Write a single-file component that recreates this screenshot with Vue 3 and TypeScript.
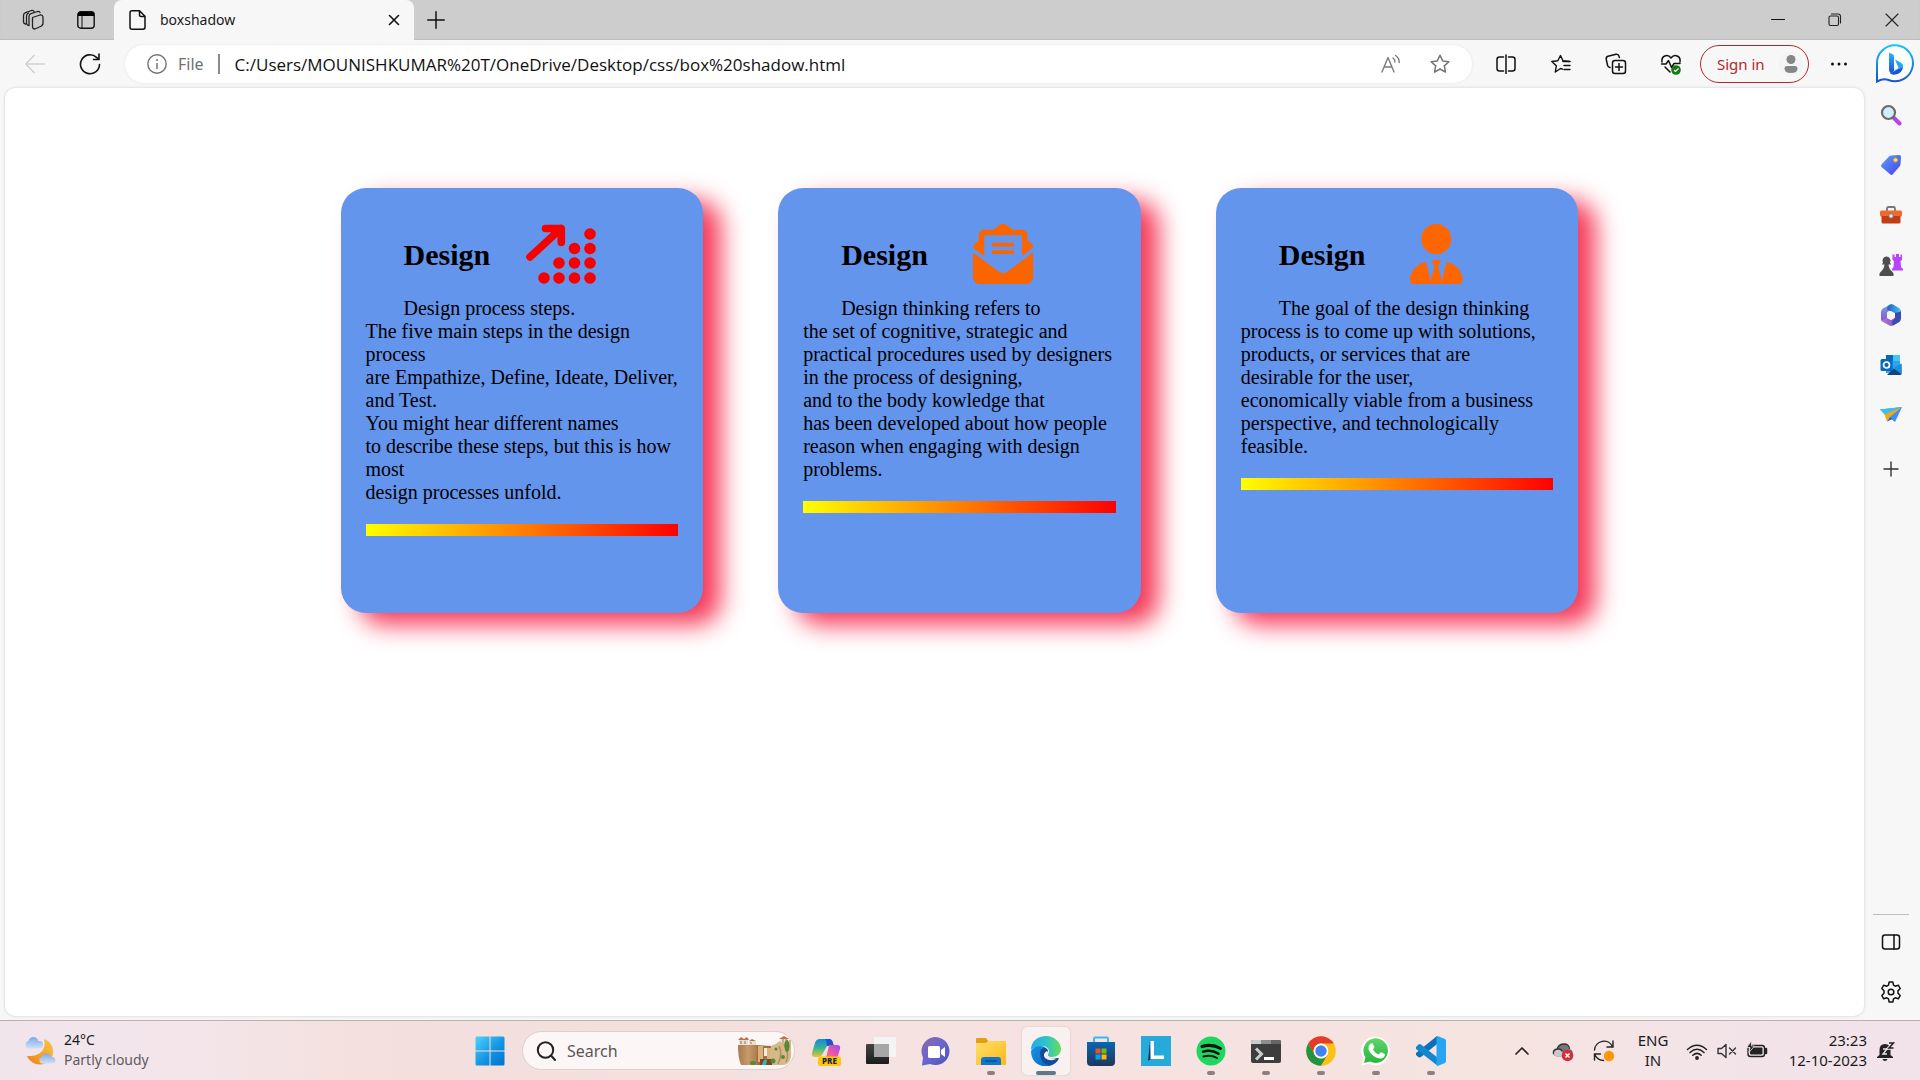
<script setup lang="ts">
import { ref } from 'vue'

interface Glyph { name: string; svg: string }
interface TaskApp extends Glyph { state: '' | 'open' | 'active' }
interface Card { title: string; lines: string[]; svg: string }

const address = ref('C:/Users/MOUNISHKUMAR%20T/OneDrive/Desktop/css/box%20shadow.html')
const query = ref('')

const svg = (size: number, body: string, attrs = ''): string =>
  `<svg width="${size}" height="${size}" viewBox="0 0 ${size} ${size}" fill="none" ${attrs}>${body}</svg>`
const line = (size: number, body: string, color = '#111', w = 1.4): string =>
  svg(size, body, `stroke="${color}" stroke-width="${w}" stroke-linecap="round" stroke-linejoin="round"`)

const icons = {
  workspaces: line(22, '<path d="M10.500 8.500l7.500-2.500q2.500-.5 3 2v7l-1.500 2-6.500 3q-2.500 0-2.500-2.500zM7 16.500V7.500q0-2 2-2.800l6.500-2.200q2-.5 2.500 1M3.500 15q-2-.5-2-2V6.500q0-2 2-2.800L9.500 1.500q2-.5 2.500 1M7 16.500q-2 0-2.500-2V7q0-2 2-2.800"/>', '#222', 1.3),
  tabActions: svg(18, '<rect x=".8" y=".8" width="16.400" height="16.400" rx="3" stroke="#111" stroke-width="1.400"/><path d="M1 5V3.500Q1 1 3.500 1h11Q17 1 17 3.500V5z" fill="#000"/><path d="M5 5v12" stroke="#111"/>'),
  doc: line(20, '<path d="M4 .8h7.500l5.500 5.500v11q0 1.900-2 1.900H4q-2 0-2-2V2.800q0-2 2-2zM11.500 1v4q0 1.500 1.500 1.500h4"/>', '#111', 1.5),
  tabClose: line(12, '<path d="M1.500 1.500l9 9m0-9l-9 9"/>', '#111', 1.6),
  plus: line(18, '<path d="M9 .8v16.400M.8 9h16.400"/>', '#111', 1.5),
  addThin: line(16, '<path d="M8 1v14M1 8h14"/>', '#333', 1.4),
  back: line(20, '<path d="M19.500 10H1M9 1.500L.8 10 9 18.500"/>', '#cfcfcf', 1.4),
  reload: line(22, '<path d="M20.500 11.500A9.500 9.500 0 1 1 17.500 4.300l2 2M20 1v5.500h-5.500"/>', '#111', 1.6),
  info: svg(20, '<circle cx="10" cy="10" r="9.200" stroke="#747474" stroke-width="1.400"/><path d="M10 9v6" stroke="#747474" stroke-width="1.500"/><circle cx="10" cy="6" r="1" fill="#747474"/>'),
  readAloud: line(20, '<path d="M1 18L7 3.500 13 18M3 13h8M12 4q2 1.500 2 4M14.500 1.500q4 2.500 3.700 7"/>', '#7b7b7b', 1.4),
  star: line(20, '<path d="M10 1.200l2.700 5.700 6.200.8-4.600 4.200 1.200 6.200L10 15l-5.500 3.100 1.200-6.200L1.100 7.700l6.200-.8z"/>', '#747474', 1.5),
  split: line(20, '<path d="M7.500 3H3.500Q1 3 1 5.500v9Q1 17 3.500 17h4M12.500 3h4Q19 3 19 5.500v9q0 2.500-2.500 2.500h-4M10 1v18.500"/>', '#111', 1.5),
  favorites: line(20, '<path d="M11.500 15.200L9.500 14.500 4.300 18l1-6.200L.8 7.500l6-.8L9.500 1.500 12 6.700l6.500.8M13 11.500h6M13 15.500h6" /><path d="M12 7.500h7" stroke-width="1.600"/>', '#111', 1.4),
  collections: line(22, '<rect x="7.500" y="7.500" width="13" height="13" rx="2.500"/><path d="M14 10.500v7M10.500 14h7M5 14.500q-2-.5-2.400-2L1.200 6.200Q1 4 3 3.300l8-2Q13.500 1 14 3.200l.4 1.300"/>', '#111', 1.5),
  health: svg(22, '<g stroke="#111" stroke-width="1.500" stroke-linecap="round" stroke-linejoin="round"><path d="M2 9C1 3 7.500.3 11 5c3.500-4.700 10-2 9 4M1.500 11H6l2.500-3.500 3 7 2.500-4h6M5 14l5 5"/></g><circle cx="16" cy="17" r="4.800" fill="#107c10"/><path d="M14 17l1.500 1.500 3-3" stroke="#fff" stroke-width="1.200"/>'),
  person: svg(30, '<circle cx="15" cy="15" r="14" fill="#f5f5f5" stroke="#fcfcfc"/><circle cx="15" cy="10.500" r="4.500" fill="#868686"/><path d="M8.500 19.500q0-2.500 2.500-2.500h8q2.500 0 2.500 2.500 0 4.500-6.500 4.500t-6.500-4.500z" fill="#868686"/>'),
  dots: svg(18, '<g fill="#111"><circle cx="2.500" cy="9" r="1.500"/><circle cx="9" cy="9" r="1.500"/><circle cx="15.500" cy="9" r="1.500"/></g>'),
  minimize: line(14, '<path d="M.5 6.500h13"/>', '#111', 1),
  restore: line(14, '<rect x="1" y="3" width="9.500" height="9.500" rx="1.500"/><path d="M3.500 1H10q2.500 0 2.500 2.500V10"/>', '#222', 1.1),
  close: line(14, '<path d="M1 1l12 12M13 1L1 13"/>', '#222', 1.1),
  bing: svg(40, '<defs><linearGradient id="bo" x1="0" y1="0" x2="0" y2="1"><stop stop-color="#18c5f2"/><stop offset="1" stop-color="#1a54d2"/></linearGradient><linearGradient id="bb" x1="0" y1="0" x2="0" y2="1"><stop stop-color="#2fb4ff"/><stop offset="1" stop-color="#1b4bd8"/></linearGradient></defs><path d="M2 37.500V20.500A18 18 0 1 1 13.500 36q-5-2-11.500 1.500z" fill="#fff" stroke="url(#bo)" stroke-width="2"/><path d="M14 8.500l4 2q1 .5 1 2V27l-2.500 2.500Q14 28.500 14 25z" fill="url(#bb)"/><path d="M20 15.500l5.500 3q4 2.500 2 6.500-1.500 3.500-6 4.500-4 1.500-6 0l8-5.500z" fill="#25a9ee"/><path d="M15 29.500q6-3.500 12.800-6-1 6-7.300 7-3.500.5-5.500-1z" fill="#1c51df"/>'),
  sidebarPanel: line(20, '<rect x="1.500" y="3" width="17" height="14" rx="2.500"/><path d="M13 3v14"/>', '#111', 1.5),
  gear: line(22, '<path d="M9.200 1h3.600l.7 3.200 1.700 1 3.100-1L20.200 7.500 18 9.800v2.400l2.200 2.300-1.900 3.300-3.100-1-1.700 1-.7 3.200H9.200l-.7-3.200-1.700-1-3.100 1-1.900-3.300L4 12.200V9.800L1.800 7.500l1.900-3.300 3.100 1 1.700-1z"/><circle cx="11" cy="11" r="2.800"/>', '#111', 1.5),
  weather: svg(32, '<defs><linearGradient id="mo" x1="1" y1="0" x2="0" y2="1"><stop stop-color="#f9c846"/><stop offset="1" stop-color="#f08214"/></linearGradient><linearGradient id="cl" x1="0" y1="0" x2="0" y2="1"><stop stop-color="#7fa8e8"/><stop offset="1" stop-color="#cfe0fa"/></linearGradient></defs><path d="M20 4c10 3 12 16 5 22-7 6-18 4-22-5 12 1 20-6 17-17z" fill="url(#mo)"/><path d="M4.500 13.500a3.800 3.800 0 0 1-.5-7.300Q6 2 9.500 2t5 4q5-.5 4.500 4 0 3.500-4 3.500z" fill="url(#cl)"/><path d="M17.500 28.500a3.500 3.500 0 0 1 0-6.500Q19 18.500 22.500 18.500t4.500 3.500q4.500-.5 4.500 3.500 0 3-3.500 3z" fill="url(#cl)"/>'),
  windows: svg(30, '<defs><linearGradient id="wi" x1="0" y1="0" x2="30" y2="30" gradientUnits="userSpaceOnUse"><stop stop-color="#50d4ff"/><stop offset=".55" stop-color="#1494e2"/><stop offset="1" stop-color="#006fd0"/></linearGradient></defs><path d="M2 .5h12.500v14H.5V2Q.5.500 2 .5zM15.500.5H28q1.500 0 1.500 1.500v12.500h-14zM.5 15.500h14v14H2q-1.500 0-1.500-1.500zM15.500 15.500h14V28q0 1.500-1.500 1.500H15.500z" fill="url(#wi)"/>'),
  search: line(20, '<circle cx="9.500" cy="9" r="7.700"/><path d="M15 14.500l4 4.500"/>', '#222', 2),
  chevron: line(16, '<path d="M2 11l6-6 6 6"/>', '#222', 1.7),
  cloud: svg(22, '<path d="M5 16.500Q1 16 1 12.500 1.500 9 5 9 7 3.500 12 4q4 .5 5 5 4 .5 3.500 4-.5 3.500-4 3.500z" fill="#777"/><path d="M2.500 15.500Q1 13 3 10.500q3-2 5.500 0l7 6H5z" fill="#c9c9c9"/><path d="M5 9q2-5 7-5t5.500 5M1.500 14q-1-4.500 4-5 3-.5 5 2" stroke="#333" stroke-width="1.300"/><circle cx="15.500" cy="15.500" r="5.800" fill="#d92b3a"/><path d="M13.500 13.500l4 4m0-4l-4 4" stroke="#fff" stroke-width="1.500"/>'),
  sync: svg(22, '<g stroke="#222" stroke-width="1.400" stroke-linecap="round"><path d="M1.500 10A9.500 9.500 0 0 1 19.500 6.500M20 1v6h-6M7.500 14H1.500v6M2 15q3 5.500 8.500 5.500"/></g><circle cx="16" cy="16" r="5.200" fill="#ff9800"/>'),
  wifi: svg(22, '<g stroke="#222" stroke-width="1.500" stroke-linecap="round"><path d="M1.500 9.500q9.500-8.500 19 0M4 12.500q7-6.500 14 0M6.800 15.300q4.200-3.800 8.400 0"/></g><circle cx="11" cy="18" r="1.900" fill="#222"/>'),
  muted: line(22, '<path d="M2 8.500h3.500L10 4.500v13l-4.500-4H2zM13.500 8l6 6m0-6l-6 6"/>', '#333', 1.4),
  battery: svg(22, '<rect x="2" y="5.500" width="16.500" height="11" rx="2.500" stroke="#222" stroke-width="1.400"/><rect x="4" y="7.500" width="12.500" height="7" rx="1" fill="#222"/><path d="M20 9v4" stroke="#222" stroke-width="2.500" stroke-linecap="round"/><path d="M5.500.8L.8 7.500H4l-1 5L8.500 6H5.300z" fill="#222" stroke="#f3e3e8" stroke-width=".8"/>'),
  bell: svg(20, '<path d="M9 3q5.500 0 5.500 6v5l2.500 2v1H1v-1l2.500-2V9Q3.500 3 9 3z" fill="#222"/><path d="M6.500 18h5q-.5 2-2.500 2t-2.500-2z" fill="#222"/><path d="M7 8h4l-4 5h4" stroke="#f3e3e8" stroke-width="1.400"/><path d="M13 2h4.500L13 7h4.500" stroke="#f3e3e8" stroke-width="3.500"/><path d="M13 2h4.500L13 7h4.500" stroke="#222" stroke-width="1.500"/>'),
}

const sideApps: Glyph[] = [
  { name: 'Search', svg: svg(22, '<path d="M13.500 13.500l6 6" stroke="#c13bf5" stroke-width="4" stroke-linecap="round"/><path d="M12 12l3 3" stroke="#777" stroke-width="2"/><circle cx="8.500" cy="8.500" r="6.500" fill="#d4ecfb" stroke="#6a6a6a" stroke-width="2.200"/>') },
  { name: 'Shopping', svg: svg(22, '<defs><linearGradient id="tg" x1="0" y1="0" x2="1" y2="1"><stop stop-color="#5aa2f5"/><stop offset="1" stop-color="#4a3df2"/></linearGradient></defs><path d="M11.500 1.500L19 1q2 0 2 2l-.5 7q0 1.500-1 2.500l-7 8q-1 1-2 0l-9-7.500q-1-1 0-2.500l7.500-8q1-1 2.500-1z" fill="url(#tg)"/><circle cx="15.500" cy="6" r="2" fill="#ffdd62" stroke="#e9b21e"/>') },
  { name: 'Tools', svg: svg(24, '<path d="M8 8V5.500Q8 4 9.500 4h5Q16 4 16 5.500V8" stroke="#777" stroke-width="1.800"/><rect x="1" y="7.500" width="22" height="6" rx="1.500" fill="#ef6a2e"/><path d="M2.500 13h19v6q0 1.500-1.500 1.500H4q-1.500 0-1.500-1.500z" fill="#c33c18"/><circle cx="12" cy="13" r="2.300" fill="#ddd" stroke="#666" stroke-width=".7"/>') },
  { name: 'Games', svg: svg(24, '<path d="M13.500 1.500h2V4H17V1h3v3h1.500V1.500H23V7l-1.500 1 .5 6 2 2v1.500H13V16l1.500-2 .5-6-1.500-1z" fill="#b845f5"/><path d="M4 9.500a4 4 0 1 1 7 0l1 2H9.500q.5 5 4 7.500 1.500 1 1 4H.5q-.5-3 1-4 3.500-2.500 4-7.500H3z" fill="#4e4e4e"/>') },
  { name: 'Microsoft 365', svg: svg(24, '<defs><linearGradient id="m1" x1="0" y1="0" x2="0" y2="1"><stop stop-color="#7b9ee8"/><stop offset="1" stop-color="#8a55c8"/></linearGradient><linearGradient id="m2"><stop stop-color="#1e5fc4"/><stop offset="1" stop-color="#45c4f2"/></linearGradient><linearGradient id="m3"><stop stop-color="#b07ad8"/><stop offset="1" stop-color="#7350b8"/></linearGradient></defs><path d="M11 1.500L4 5.500Q2 6.800 2 9v7q0 1.500 1 2.500l5-3.500V9.500l5-4z" fill="url(#m1)"/><path d="M11 1.500q1.500-1 3 0l6 3.500q2 1.200 2 3.500v5l-6-3-8-4q0-3.500 3-5z" fill="url(#m2)"/><path d="M2.500 17.500q1 1.500 2.500 2l6 3.200q1.500.6 3-.2l6.500-3.700-4.500-4.300-4 2.500-4-2z" fill="url(#m3)"/><path d="M22 8.500v7q0 2-1.500 3.200L14 22.500q-2-3 0-5l2-2.500v-5z" fill="#3d49b4"/><path d="M12 8l4 2.200v4.400l-4 2.300-4-2.300v-4.400z" fill="#f7f7f7"/>') },
  { name: 'Outlook', svg: svg(22, '<path d="M6 1h14v18H6z" fill="#28a8ea"/><path d="M6 1h7v6H6z" fill="#0b67b5"/><path d="M13 1h7v6h-7z" fill="#41c7f5"/><path d="M7 21h13q1.500 0 1.500-1.500V10L13 15z" fill="#14447d"/><path d="M13 14l8.500 6V9.500z" fill="#1c90e0"/><rect x=".5" y="5" width="12" height="12" rx="1.500" fill="#0969bf"/><circle cx="6.500" cy="11" r="3" stroke="#fff" stroke-width="1.700"/>') },
  { name: 'Drop', svg: svg(24, '<path d="M1 6.500L23 4l-7 15-5.500-4.500z" fill="#3b8ff5"/><path d="M1 6.500L23 4 6 12z" fill="#37bff2"/><path d="M23 4L5.500 11.500l2.500 7 3-4.500z" fill="#f5a816"/><path d="M8 18.500L11 14l2.500 2z" fill="#1b62c4"/>') },
]

const tabIcons: Glyph[] = [
  { name: 'Split screen', svg: icons.split },
  { name: 'Favorites', svg: icons.favorites },
  { name: 'Collections', svg: icons.collections },
  { name: 'Browser essentials', svg: icons.health },
]

const windowButtons: Glyph[] = [
  { name: 'Minimize', svg: icons.minimize },
  { name: 'Restore', svg: icons.restore },
  { name: 'Close', svg: icons.close },
]

const village = '<svg width="54" height="30" viewBox="0 0 54 30"><defs><linearGradient id="vl"><stop stop-color="#a87850"/><stop offset=".5" stop-color="#c79a66"/><stop offset="1" stop-color="#a77c52"/></linearGradient></defs><path d="M0 9h18l2 20H3Q0 22 0 9z" fill="url(#vl)"/><path d="M18 9l16 1-2 19H19z" fill="#a56d3c"/><path d="M20 10h5v16h-5zM29 12h4v12h-4z" fill="#d9b27c"/><path d="M33 10q6-2 10-6h10v17q-2 8-8 8H31z" fill="#d6b988"/><path d="M41 10q4 8-1 18M46 8q6 10 2 18" stroke="#b18e5f" stroke-width="1.500" fill="none"/><path d="M1 4h9v5H1zM11 5h7v4h-7zM42 2h9v4h-9z" fill="#eadfcf"/><path d="M0 4l3-3 3 2 3-2 2 3zM11 5l3-2 4 2zM41 3l5-3 5 3z" fill="#bf6f4b"/><path d="M3 5v3M7 5v3M13 6v2M45 3v3M48 3v3" stroke="#88775f"/><path d="M26 12h3v8h-3z" fill="#f3eee4"/><path d="M22 23h12v6H22z" fill="#7c4524"/><path d="M24 29q1-4 3-6l2 1-1 5z" fill="#2ab7c8"/><g fill="#568a35"><ellipse cx="15" cy="27" rx="3" ry="2"/><circle cx="35" cy="25" r="2.500"/><circle cx="38" cy="13" r="1.500"/><ellipse cx="49" cy="10" rx="2.500" ry="6"/><circle cx="45" cy="21" r="2"/></g></svg>'

const apps: TaskApp[] = [
  { name: 'Copilot', state: '', svg: svg(30, '<defs><linearGradient id="c1" x1="0" y1="0" x2="0" y2="1"><stop stop-color="#138ad8"/><stop offset=".5" stop-color="#35b595"/><stop offset="1" stop-color="#e5c62a"/></linearGradient><linearGradient id="c2" x1="1" y1="0" x2="0" y2="1"><stop stop-color="#a04af0"/><stop offset=".5" stop-color="#e957a8"/><stop offset="1" stop-color="#fb8a52"/></linearGradient></defs><path d="M9 3h9q3 0 4 4l.5 3H16l-5 9q-1 2-4 2H4q-4 0-3-4l3-10q1-4 5-4z" fill="url(#c1)"/><path d="M14 3h4q3 0 4 4l1 3h-7q-.5-6-2-7z" fill="#1c57cb"/><path d="M18 9h8q4 0 3 4l-2 7q-1 3-4 3H12q3 0 4-5z" fill="url(#c2)"/><rect x="7" y="20.500" width="23" height="9.500" rx="2.500" fill="#fdc70a"/><text x="18.500" y="28" text-anchor="middle" font-family="Noto Sans, sans-serif" font-weight="800" font-size="8" fill="#222">PRE</text>') },
  { name: 'Task view', state: '', svg: svg(30, '<defs><linearGradient id="tv" x1="0" y1="0" x2="0" y2="1"><stop stop-color="#444"/><stop offset="1" stop-color="#1c1c1c"/></linearGradient></defs><rect x="0" y="8" width="23" height="20" rx="1" fill="url(#tv)"/><rect x="8" y="1" width="22" height="20" rx="1" fill="#f4f4f4"/><path d="M8 8h15v13H8z" fill="#a7a7a7"/>') },
  { name: 'Chat', state: '', svg: svg(30, '<defs><linearGradient id="ct" x1="0" y1="0" x2="1" y2="1"><stop stop-color="#8b6aa8"/><stop offset=".5" stop-color="#6a65d0"/><stop offset="1" stop-color="#4d50bd"/></linearGradient></defs><path d="M1 29.500l1-8A14 14 0 1 1 9 28z" fill="url(#ct)"/><rect x="7" y="10" width="12" height="12" rx="1.500" fill="#fff"/><path d="M20 14l4-3v10l-4-3z" fill="#fff"/>') },
  { name: 'File Explorer', state: 'open', svg: svg(30, '<defs><linearGradient id="fe" x1="0" y1="0" x2="1" y2="1"><stop stop-color="#ffdf6b"/><stop offset="1" stop-color="#f9b917"/></linearGradient></defs><path d="M0 3q0-1 1-1h9l3 4v3H0z" fill="#e0a012"/><path d="M0 7h10l2-2h17q1 0 1 1v22q0 1-1 1H0z" fill="url(#fe)"/><path d="M5 24q0-3 3-3h14q3 0 3 3v5H5z" fill="#1276c8"/><path d="M9 25h12" stroke="#0a4a8c" stroke-width="1.300"/>') },
  { name: 'Microsoft Edge', state: 'active', svg: svg(30, '<defs><linearGradient id="e1"><stop stop-color="#27a9ec"/><stop offset=".5" stop-color="#2ec4c9"/><stop offset="1" stop-color="#68dd5a"/></linearGradient><linearGradient id="e2" x1="0" y1="0" x2="1" y2="1"><stop stop-color="#1595e2"/><stop offset="1" stop-color="#0867c6"/></linearGradient></defs><path d="M0 14C0 5 7 0 15 0s15 6 15 13c0 5-4 8-9 8-3 0-5-1-4-3 3-3 0-8-6-8Q4 10 0 14z" fill="url(#e1)"/><path d="M0 15q3-5 9-5c5 0 8 3 8 6-3-3-9 3-4 9 2 2 5 4 8 4-9 4-21-1-21-14z" fill="url(#e2)"/><path d="M9 17q0-4 4-5 4 0 4 4-3 3 0 5 3 2.500 7 1.500 3-1 4 0-3 6-9 7Q9 28 9 17z" fill="#124b98"/><path d="M16 15q-5 3-2 7 5 4 11 1-6 0-8-3-1-2 0-4z" fill="#f9efef"/>') },
  { name: 'Microsoft Store', state: '', svg: svg(30, '<defs><linearGradient id="ms" x1="0" y1="0" x2="0" y2="1"><stop stop-color="#0866b3"/><stop offset="1" stop-color="#20365d"/></linearGradient></defs><path d="M8 6V2.500Q8 1.500 9 1.500h12q1 0 1 1V6" stroke="#2bbef5" stroke-width="2"/><path d="M1 6h28v20q0 4-4 4H5q-4 0-4-4z" fill="url(#ms)"/><path d="M9.500 12.500H14.500v5h-5z" fill="#f25022"/><path d="M15.500 12.500h5v5h-5z" fill="#7fba00"/><path d="M9.500 18.500h5v5h-5z" fill="#00a4ef"/><path d="M15.500 18.500h5v5h-5z" fill="#ffb900"/>') },
  { name: 'Lenovo Vantage', state: '', svg: svg(30, '<path d="M0 0h30v30H0z" fill="#25aad9"/><path d="M9 5l-2 20 3-2h12v-1H10z" fill="#11315e"/><path d="M9.500 5H13v14.500h10V23H9.500z" fill="#fff"/>') },
  { name: 'Spotify', state: 'open', svg: svg(30, '<circle cx="15" cy="15" r="14.500" fill="#1ed760"/><g stroke="#111" stroke-linecap="round"><path d="M6 10.500q10-3 18.500 2" stroke-width="3"/><path d="M7 15.700q8.500-2.500 15.500 2" stroke-width="2.500"/><path d="M7.500 20.500q7.500-2 13.500 1.500" stroke-width="2"/></g>') },
  { name: 'Terminal', state: 'open', svg: svg(30, '<path d="M1.500 4h27Q30 4 30 5.500V25q0 2-2 2H2q-2 0-2-2V5.500Q0 4 1.500 4z" fill="#3d3d3d"/><path d="M0 8V5.500Q0 4 1.500 4H10v4z" fill="#c9c9c9"/><path d="M10 4h10v4H10z" fill="#8d8d8d"/><path d="M20 4h8.500Q30 4 30 5.500V8H20z" fill="#666"/><path d="M5 12.500l5.500 5.500L5 23.500" stroke="#ccc" stroke-width="3"/><path d="M13 22.500h10" stroke="#fff" stroke-width="3"/>') },
  { name: 'Chrome', state: 'open', svg: svg(30, '<circle cx="15" cy="15" r="14.800" fill="#fbc116"/><path d="M2.200 7.600A14.800 14.800 0 0 1 27.800 7.600H15A7.400 7.400 0 0 0 8.600 18.700z" fill="#e33b2e"/><path d="M2.200 7.600l6.400 11.100A7.400 7.400 0 0 0 21.400 18.700L15 29.800A14.800 14.800 0 0 1 2.200 7.600z" fill="#229342"/><circle cx="15" cy="15" r="7.400" fill="#fff"/><circle cx="15" cy="15" r="5.700" fill="#4283f0"/>') },
  { name: 'WhatsApp', state: 'open', svg: svg(30, '<defs><linearGradient id="wa" x1="0" y1="0" x2="0" y2="1"><stop stop-color="#5cd66b"/><stop offset="1" stop-color="#2bb53e"/></linearGradient></defs><path d="M.5 29.500l2-7A14.300 14.300 0 1 1 8 27.500z" fill="#fff"/><path d="M3 27l1.500-5.500A12.300 12.300 0 1 1 9 25.500z" fill="url(#wa)"/><path d="M9 8q2-1.500 3 0l1.300 3q0 1-1.500 2.500Q14 17 17.500 18.500l2-2q.5-.5 1.500 0l2.700 1.500q.5.500 0 2-1.500 3-5 2.500Q11 21 7.500 13.500 6.800 10 9 8z" fill="#fff"/>') },
  { name: 'Visual Studio Code', state: 'open', svg: svg(30, '<path d="M21 0v8L5 21l-2 .5L0 19v-2z" fill="#0b70b8"/><path d="M0 11l3-3 2 .5L22 22v8L0 13z" fill="#1187cf"/><path d="M21.500 0L29 3q1 .5 1 2v20q0 1.500-1 2l-7.500 3q-1-.5-1-2V2q0-1.500 1-2z" fill="#27a5f2"/>') },
]

const chartArt = '<g fill="#f60000"><circle cx="64" cy="10" r="5.800"/><circle cx="64" cy="24.500" r="5.800"/><circle cx="64" cy="39" r="5.800"/><circle cx="64" cy="54" r="5.800"/><circle cx="48.500" cy="24.500" r="5.800"/><circle cx="48.500" cy="39" r="5.800"/><circle cx="48.500" cy="54" r="5.800"/><circle cx="33" cy="39" r="5.800"/><circle cx="33" cy="54" r="5.800"/><circle cx="18" cy="54" r="5.800"/></g><path d="M4 33L35 4.500M19.500 4.500H35.300V18.500" fill="none" stroke="#f60000" stroke-width="7.600" stroke-linecap="round" stroke-linejoin="round"/>'
const mailArt = '<path transform="translate(9) scale(.1175)" fill="#fb6500" d="M215.400 96H96v177.400L.2 202.500c1.600-18.100 10.900-34.900 25.700-45.800L48 140.300V96c0-26.500 21.500-48 48-48h76.600l49.900-36.900C232.200 3.900 243.900 0 256 0s23.800 3.900 33.500 11L339.400 48H416c26.500 0 48 21.500 48 48v44.300l22.100 16.400c14.800 10.900 24.100 27.700 25.700 45.800L416 273.400V96zM0 448V242.100L217.600 403.300c11.100 8.200 24.600 12.700 38.400 12.700s27.300-4.400 38.400-12.700L512 242.100V448c0 35.300-28.700 64-64 64H64c-35.300 0-64-28.700-64-64zM176 160H336c8.800 0 16 7.200 16 16s-7.200 16-16 16H176c-8.800 0-16-7.200-16-16s7.200-16 16-16zm0 64H336c8.800 0 16 7.200 16 16s-7.200 16-16 16H176c-8.800 0-16-7.200-16-16s7.200-16 16-16z"/>'
const userArt = '<path transform="translate(8) scale(.1175)" fill="#ff6600" d="M96 128a128 128 0 1 0 256 0A128 128 0 1 0 96 128zm94.500 200.200l18.600 31L175.800 483.100l-36-146.900c-2-8.100-9.800-13.400-17.900-11.300C51.900 342.400 0 405.800 0 481.300c0 17 13.800 30.700 30.700 30.700H417.300c17 0 30.700-13.800 30.700-30.700c0-75.500-51.900-138.900-121.900-156.400c-8.100-2-15.900 3.300-17.900 11.300l-36 146.900L238.900 359.200l18.600-31c6.400-10.700-1.300-24.200-13.700-24.200H204.300c-12.400 0-20.100 13.600-13.700 24.200z"/>'

const cards: Card[] = [
  {
    title: 'Design',
    svg: chartArt,
    lines: ['Design process steps.', 'The five main steps in the design', 'process', 'are Empathize, Define, Ideate, Deliver,', 'and Test.', 'You might hear different names', 'to describe these steps, but this is how', 'most', 'design processes unfold.'],
  },
  {
    title: 'Design',
    svg: mailArt,
    lines: ['Design thinking refers to', 'the set of cognitive, strategic and', 'practical procedures used by designers', 'in the process of designing,', 'and to the body kowledge that', 'has been developed about how people', 'reason when engaging with design', 'problems.'],
  },
  {
    title: 'Design',
    svg: userArt,
    lines: ['The goal of the design thinking', 'process is to come up with solutions,', 'products, or services that are', 'desirable for the user,', 'economically viable from a business', 'perspective, and technologically', 'feasible.'],
  },
]
</script>

<template>
  <div class="screen">
    <header class="tabstrip">
      <button class="icon-btn strip-btn first" aria-label="Workspaces" v-html="icons.workspaces"></button>
      <button class="icon-btn strip-btn" aria-label="Tab actions" v-html="icons.tabActions"></button>
      <div class="tab">
        <span class="icon" v-html="icons.doc"></span>
        <span class="tab-title">boxshadow</span>
        <button class="icon-btn" aria-label="Close tab" v-html="icons.tabClose"></button>
      </div>
      <button class="icon-btn new-tab" aria-label="New tab" v-html="icons.plus"></button>
      <div class="window-buttons">
        <button v-for="b in windowButtons" :key="b.name" class="icon-btn" :aria-label="b.name" v-html="b.svg"></button>
      </div>
    </header>

    <div class="toolbar">
      <button class="icon-btn nav-btn back" aria-label="Back" v-html="icons.back"></button>
      <button class="icon-btn nav-btn" aria-label="Reload" v-html="icons.reload"></button>
      <div class="omnibox">
        <span class="icon" v-html="icons.info"></span>
        <span class="scheme">File</span>
        <span class="rule"></span>
        <input v-model="address" class="address" type="text" aria-label="Address" spellcheck="false" />
        <button class="icon-btn omni-btn" aria-label="Read aloud" v-html="icons.readAloud"></button>
        <button class="icon-btn omni-btn" aria-label="Add to favorites" v-html="icons.star"></button>
      </div>
      <div class="tools">
        <button v-for="t in tabIcons" :key="t.name" class="icon-btn tool" :aria-label="t.name" v-html="t.svg"></button>
      </div>
      <button class="sign-in"><span>Sign in</span><span class="icon" v-html="icons.person"></span></button>
      <button class="icon-btn more" aria-label="More" v-html="icons.dots"></button>
      <button class="icon-btn bing" aria-label="Bing" v-html="icons.bing"></button>
    </div>

    <div class="body">
      <main class="page">
        <section class="cards">
          <article v-for="(card, i) in cards" :key="i" class="card">
            <div class="card-head">
              <h2>{{ card.title }}</h2>
              <svg width="76" height="60" viewBox="0 0 76 60" v-html="card.svg"></svg>
            </div>
            <p><template v-for="(text, n) in card.lines" :key="n">{{ text }}<br v-if="n < card.lines.length - 1" /></template></p>
            <div class="bar"></div>
          </article>
        </section>
      </main>
      <aside class="sidebar">
        <button v-for="s in sideApps" :key="s.name" class="icon-btn side-btn" :aria-label="s.name" v-html="s.svg"></button>
        <button class="icon-btn side-btn add" aria-label="Customize" v-html="icons.addThin"></button>
        <div class="side-foot">
          <button class="icon-btn side-btn" aria-label="Hide sidebar" v-html="icons.sidebarPanel"></button>
          <button class="icon-btn side-btn" aria-label="Settings" v-html="icons.gear"></button>
        </div>
      </aside>
    </div>

    <footer class="taskbar">
      <div class="weather">
        <span class="icon" v-html="icons.weather"></span>
        <div class="two-line"><span>24°C</span><span class="muted">Partly cloudy</span></div>
      </div>
      <div class="dock">
        <button class="icon-btn dock-btn" aria-label="Start" v-html="icons.windows"></button>
        <label class="search">
          <span class="icon" v-html="icons.search"></span>
          <input v-model="query" type="text" placeholder="Search" aria-label="Search" />
          <span class="icon" v-html="village"></span>
        </label>
        <button v-for="a in apps" :key="a.name" class="icon-btn dock-btn" :class="a.state" :aria-label="a.name">
          <span class="tile" v-html="a.svg"></span>
        </button>
      </div>
      <div class="tray">
        <button class="icon-btn tray-wide" aria-label="Hidden icons" v-html="icons.chevron"></button>
        <button class="icon-btn tray-wide" aria-label="OneDrive" v-html="icons.cloud"></button>
        <button class="icon-btn tray-wide" aria-label="Updates" v-html="icons.sync"></button>
        <div class="two-line lang"><span>ENG</span><span>IN</span></div>
        <button class="icon-btn tray-tight" aria-label="Network" v-html="icons.wifi"></button>
        <button class="icon-btn tray-tight" aria-label="Volume" v-html="icons.muted"></button>
        <button class="icon-btn tray-tight" aria-label="Battery" v-html="icons.battery"></button>
        <div class="two-line clock"><span>23:23</span><span>12-10-2023</span></div>
        <button class="icon-btn bell" aria-label="Notifications" v-html="icons.bell"></button>
      </div>
    </footer>
  </div>
</template>

<style>
body {
  margin: 0;
}
</style>

<style scoped>
.screen {
  display: flex;
  flex-direction: column;
  min-height: 100vh;
  background: #f7f7f7;
  color: #1b1b1b;
  font: 15px/20px "Noto Sans", "Open Sans", sans-serif;
}
.screen * {
  box-sizing: border-box;
}
.icon,
.icon-btn {
  display: flex;
  align-items: center;
  justify-content: center;
  flex: none;
}
.icon-btn {
  padding: 0;
  border: 0;
  background: none;
  color: inherit;
}
input {
  min-width: 0;
  padding: 0;
  border: 0;
  outline: 0;
  background: none;
  font-family: inherit;
}

.tabstrip {
  display: flex;
  align-items: stretch;
  height: 40px;
  background: #cdcdcd;
  box-shadow: inset 0 -1px 1px #bdbdbd;
}
.strip-btn {
  width: 53px;
}
.strip-btn.first {
  margin-left: 6px;
}
.tab {
  display: flex;
  align-items: center;
  width: 300px;
  margin-left: 2px;
  padding: 0 14px;
  border-radius: 8px 8px 0 0;
  background: #f7f7f7;
}
.tab-title {
  flex: 1;
  margin-left: 12px;
  font-size: 14px;
}
.new-tab {
  width: 43px;
}
.window-buttons {
  display: flex;
  margin-left: auto;
}
.window-buttons .icon-btn {
  width: 57px;
}

.toolbar {
  display: flex;
  align-items: center;
  height: 48px;
}
.nav-btn {
  width: 55px;
}
.nav-btn.back {
  margin-left: 7px;
}
.omnibox {
  display: flex;
  flex: 1;
  align-items: center;
  height: 38px;
  margin-left: 8px;
  padding-left: 22px;
  padding-right: 8px;
  border-radius: 19px;
  background: #fff;
  box-shadow: 0 0 3px #e2e2e2;
}
.scheme {
  margin-left: 11px;
  color: #6f6f6f;
  font-size: 16px;
}
.rule {
  width: 2px;
  height: 20px;
  margin: 0 15px 0 14px;
  background: #8a8a8a;
}
.address {
  flex: 1;
  color: #111;
  font-family: "Open Sans", "Noto Sans", sans-serif;
  font-size: 17px;
}
.omni-btn {
  width: 49px;
}
.tools {
  display: flex;
  margin-left: 6px;
}
.tool {
  width: 55px;
}
.sign-in {
  display: flex;
  flex: none;
  align-items: center;
  justify-content: space-between;
  width: 109px;
  height: 38px;
  margin-left: 2px;
  padding: 0 2px 0 16px;
  border: 1px solid #b3282d;
  border-radius: 19px;
  background: #f7f7f7;
  color: #b3282d;
  font: 15px/20px "Noto Sans", sans-serif;
}
.more {
  width: 60px;
}
.bing {
  width: 51px;
}

.body {
  display: flex;
  flex: 1;
}
.page {
  flex: 1;
  margin: 0 0 4px 5px;
  padding: 100px 0 100px 50px;
  border-radius: 10px;
  background: #fff;
  box-shadow: 0 0 3px #c8c8c8;
}
.cards {
  display: grid;
  grid-template-columns: repeat(3, 1fr);
  gap: 75px;
  max-width: 1238px;
  margin: 0 auto;
  color: #000;
  font: 20px/23px "Liberation Serif", "Times New Roman", serif;
}
.card {
  min-height: 425px;
  padding: 36px 25px 25px;
  border-radius: 25px;
  background: cornflowerblue;
  box-shadow: 18px 12px 25px #f53a59;
}
.card-head {
  display: flex;
  align-items: flex-end;
  gap: 36px;
  height: 60px;
  padding-left: 38px;
}
.card-head h2 {
  margin: 0 0 12px;
  font-size: 30px;
  line-height: 34px;
}
.card p {
  margin: 13px 0 20px;
  text-indent: 38px;
  white-space: nowrap;
}
.bar {
  height: 12px;
  background: linear-gradient(to right, yellow, red);
}

.sidebar {
  display: flex;
  flex-direction: column;
  align-items: center;
  width: 56px;
  padding-top: 2px;
  padding-right: 2px;
}
.side-btn {
  width: 50px;
  height: 50px;
}
.side-btn.add {
  margin-top: 4px;
}
.side-foot {
  display: flex;
  flex-direction: column;
  align-items: center;
  width: 36px;
  margin-top: auto;
  margin-bottom: 3px;
  padding-top: 2px;
  border-top: 1px solid #bdbdbd;
}

.taskbar {
  display: grid;
  grid-template-columns: 1fr auto 1fr;
  align-items: center;
  height: 60px;
  border-top: 1px solid #b9b0b2;
  background: linear-gradient(to right, #f1e5ec 0%, #f3e5ea 10%, #f4e1df 18%, #f3dfdd 24%, #f5e2e1 50%, #f6e4e1 80%, #f3e4e8 88%, #f2e2ea 100%);
}
.weather {
  display: flex;
  align-items: center;
  gap: 8px;
  padding-left: 24px;
}
.two-line {
  display: flex;
  flex-direction: column;
  padding-bottom: 2px;
  font-size: 14px;
}
.muted {
  color: #5f5a5c;
}
.dock {
  display: flex;
  align-items: center;
}
.dock-btn {
  flex-direction: column;
  position: relative;
  width: 55px;
  height: 48px;
}
.tile {
  display: flex;
  align-items: center;
  justify-content: center;
  width: 48px;
  height: 48px;
  border-radius: 5px;
}
.active .tile {
  background: #f9f0f0;
  box-shadow: 0 0 2px #cdbfc0;
}
.open::after,
.active::after {
  content: "";
  position: absolute;
  bottom: 0;
  width: 8px;
  height: 4px;
  border-radius: 2px;
  background: #8a8080;
}
.active::after {
  width: 20px;
  background: #5d7888;
}
.search {
  display: flex;
  align-items: center;
  width: 273px;
  height: 39px;
  margin: 0 3px 0 5px;
  padding: 0 2px 0 13px;
  border: 1px solid #dccfcf;
  border-radius: 20px;
  background: #fcf6f6;
}
.search input {
  flex: 1;
  margin-left: 11px;
  font-size: 16px;
}
.search input::placeholder {
  color: #5c5656;
  opacity: 1;
}
.tray {
  display: flex;
  align-items: center;
  justify-content: flex-end;
  padding-right: 16px;
}
.tray-wide {
  width: 41px;
}
.lang {
  align-items: center;
  width: 58px;
  font-size: 15px;
}
.tray-tight {
  width: 30px;
}
.clock {
  align-items: flex-end;
  width: 95px;
  font-size: 15px;
}
.bell {
  width: 37px;
}
</style>
